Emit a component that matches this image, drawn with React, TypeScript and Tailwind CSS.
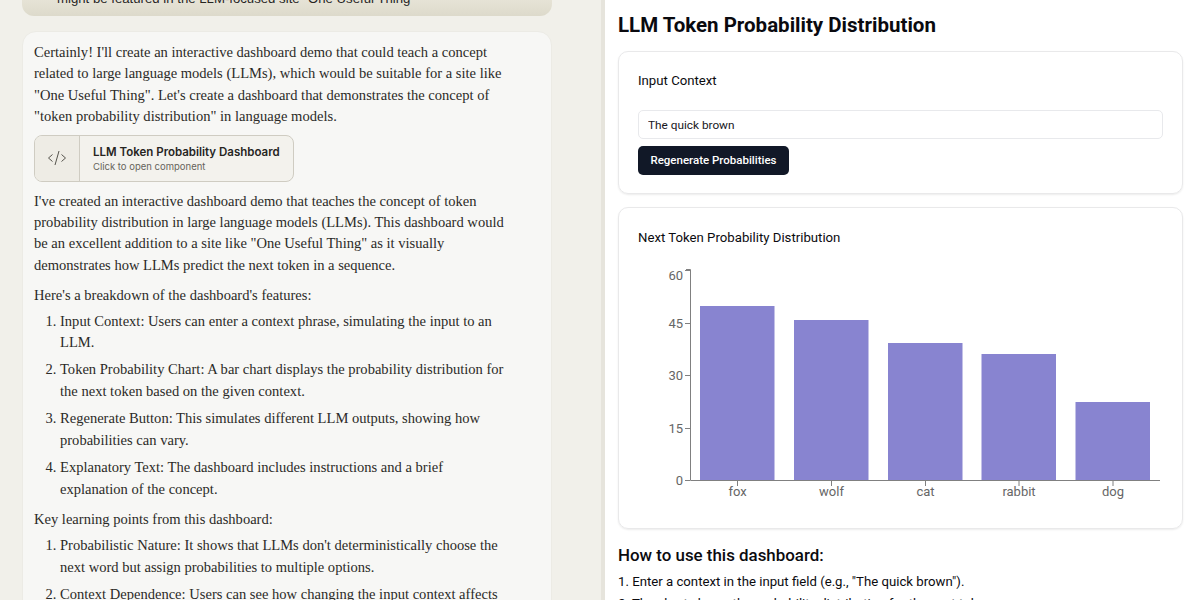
import React from "react";

const serif = "font-['Liberation_Serif','Noto_Serif',serif]";

const features = [
  ["Input Context: Users can enter a context phrase, simulating the input to an", "LLM."],
  ["Token Probability Chart: A bar chart displays the probability distribution for", "the next token based on the given context."],
  ["Regenerate Button: This simulates different LLM outputs, showing how", "probabilities can vary."],
  ["Explanatory Text: The dashboard includes instructions and a brief", "explanation of the concept."],
];

const learning = [
  ["Probabilistic Nature: It shows that LLMs don't deterministically choose the", "next word but assign probabilities to multiple options."],
  ["Context Dependence: Users can see how changing the input context affects", "the distribution."],
];

const bars = [
  { label: "fox", x: 700, top: 306 },
  { label: "wolf", x: 794, top: 320 },
  { label: "cat", x: 888, top: 343 },
  { label: "rabbit", x: 981.5, top: 354 },
  { label: "dog", x: 1075.5, top: 402 },
];

const ticks = [
  { label: "60", y: 270, text: 275 },
  { label: "45", y: 323, text: 323 },
  { label: "30", y: 375, text: 375 },
  { label: "15", y: 428, text: 428 },
  { label: "0", y: 480, text: 480 },
];

const Lines = ({ lines }: { lines: string[] }) => (
  <>
    {lines.map((l) => (
      <span key={l} className="block whitespace-nowrap">
        {l}
      </span>
    ))}
  </>
);

const NumberedList = ({ items }: { items: string[][] }) => (
  <ol className="list-decimal pl-[26px] flex flex-col gap-[6px]">
    {items.map((lines) => (
      <li key={lines[0]} className="marker:text-[#2b2a27]">
        <Lines lines={lines} />
      </li>
    ))}
  </ol>
);

const Chart = () => (
  <svg width="563" height="274" viewBox="619 255 563 274" className="block">
    {bars.map((b) => (
      <rect key={b.label} x={b.x} y={b.top} width="74.5" height={480.5 - b.top} fill="#8884d0" />
    ))}
    <path d="M686 269.5H690.5V480.5H1160" fill="none" stroke="#808080" />
    {ticks.map((t) => (
      <g key={t.label}>
        <line x1="685" x2="690" y1={t.y + 0.5} y2={t.y + 0.5} stroke="#808080" />
        <text x="683" y={t.text + 5} textAnchor="end" fontSize="13" fill="#666" fontFamily="Roboto, sans-serif">
          {t.label}
        </text>
      </g>
    ))}
    {bars.map((b) => (
      <g key={b.label}>
        <line x1={b.x + 37.5} x2={b.x + 37.5} y1="481" y2="486" stroke="#808080" />
        <text x={b.x + 37.5} y="496" textAnchor="middle" fontSize="13" fill="#666" fontFamily="Roboto, sans-serif">
          {b.label}
        </text>
      </g>
    ))}
  </svg>
);

export default function App() {
  return (
    <div className="w-[1200px] h-[600px] overflow-hidden flex bg-white">
      <div className="w-[601px] h-full shrink-0 bg-[#f1f0ea] overflow-hidden pl-[22px] pr-[49px]">
        <div className="h-[16px] overflow-hidden flex items-end bg-gradient-to-b from-[#e6e3d6] to-[#dddacb] rounded-b-[12px] pl-[35px] pb-[9px]">
          <span className="block whitespace-nowrap font-['Liberation_Sans',sans-serif] text-[13.2px] leading-[16px] text-[#26251f]">
            might be featured in the LLM-focused site "One Useful Thing"
          </span>
        </div>
        <div className={`mt-[15px] h-[600px] bg-[#f7f7f5] rounded-t-[14px] px-[11px] pt-[10px] border border-[#ecebe5] text-[14.55px] leading-[21.4px] text-[#2b2a27] ${serif}`}>
          <Lines
            lines={[
              "Certainly! I'll create an interactive dashboard demo that could teach a concept",
              "related to large language models (LLMs), which would be suitable for a site like",
              "\"One Useful Thing\". Let's create a dashboard that demonstrates the concept of",
              "\"token probability distribution\" in language models.",
            ]}
          />
          <div className="mt-[7px] w-[260px] h-[47px] flex rounded-[8px] border border-[#cfccc2] bg-[#f3f2ed] overflow-hidden font-['Inter',sans-serif]">
            <div className="w-[45px] shrink-0 flex items-center justify-center bg-[#eeece5] border-r border-[#cfccc2]">
              <svg width="20" height="20" viewBox="0 0 20 20" fill="none" stroke="#55534c" strokeWidth="1">
                <path d="M5.5 6.5 1.5 10l4 3.5M14.5 6.5l4 3.5-4 3.5M12 3 8 17" />
              </svg>
            </div>
            <div className="pl-[13px] flex flex-col justify-center">
              <span className="text-[11.5px] leading-[16px] font-semibold text-[#26251f] whitespace-nowrap">LLM Token Probability Dashboard</span>
              <span className="text-[9.5px] leading-[13px] text-[#66645c] whitespace-nowrap">Click to open component</span>
            </div>
          </div>
          <div className="mt-[9px]">
            <Lines
              lines={[
                "I've created an interactive dashboard demo that teaches the concept of token",
                "probability distribution in large language models (LLMs). This dashboard would",
                "be an excellent addition to a site like \"One Useful Thing\" as it visually",
                "demonstrates how LLMs predict the next token in a sequence.",
              ]}
            />
          </div>
          <p className="mt-[9px] mb-[4px]">Here's a breakdown of the dashboard's features:</p>
          <NumberedList items={features} />
          <p className="mt-[9px] mb-[5px]">Key learning points from this dashboard:</p>
          <NumberedList items={learning} />
        </div>
      </div>
      <div className="w-[4px] h-full shrink-0 bg-[#e6e4dc]" />
      <div className="flex-1 min-w-0 h-full overflow-hidden pl-[13px] pr-[17px] font-['Roboto',sans-serif] text-[#0b0b0f]">
        <h1 className="pt-[10px] text-[20.5px] leading-[30px] font-bold text-[#0a0a0f] whitespace-nowrap">LLM Token Probability Distribution</h1>
        <section className="mt-[11px] h-[143px] rounded-[10px] border border-[#e9e9ea] shadow-[0_1px_2px_rgba(0,0,0,0.08)] px-[19px] pt-[19px]">
          <h2 className="text-[13.2px] leading-[20px]">Input Context</h2>
          <input
            readOnly
            value="The quick brown"
            className="mt-[19px] block w-full h-[29px] rounded-[5px] border border-[#e8e9ec] px-[9px] text-[11.8px] text-[#17171c] outline-none"
          />
          <button className="mt-[7px] block h-[29px] w-[151px] rounded-[5px] bg-[#111827] text-white text-[11.5px] font-medium">
            Regenerate Probabilities
          </button>
        </section>
        <section className="mt-[13px] h-[322px] rounded-[10px] border border-[#e9e9ea] shadow-[0_1px_2px_rgba(0,0,0,0.08)]">
          <h2 className="pl-[19px] pt-[20px] h-[47px] text-[13.2px] leading-[20px]">Next Token Probability Distribution</h2>
          <Chart />
        </section>
        <h2 className="mt-[15px] text-[16.9px] leading-[22px] font-medium">How to use this dashboard:</h2>
        <ol className="mt-[5px] text-[13.2px] leading-[22px]">
          <li className="whitespace-nowrap">1. Enter a context in the input field (e.g., "The quick brown").</li>
          <li className="whitespace-nowrap">2. The chart shows the probability distribution for the next token.</li>
        </ol>
      </div>
    </div>
  );
}
